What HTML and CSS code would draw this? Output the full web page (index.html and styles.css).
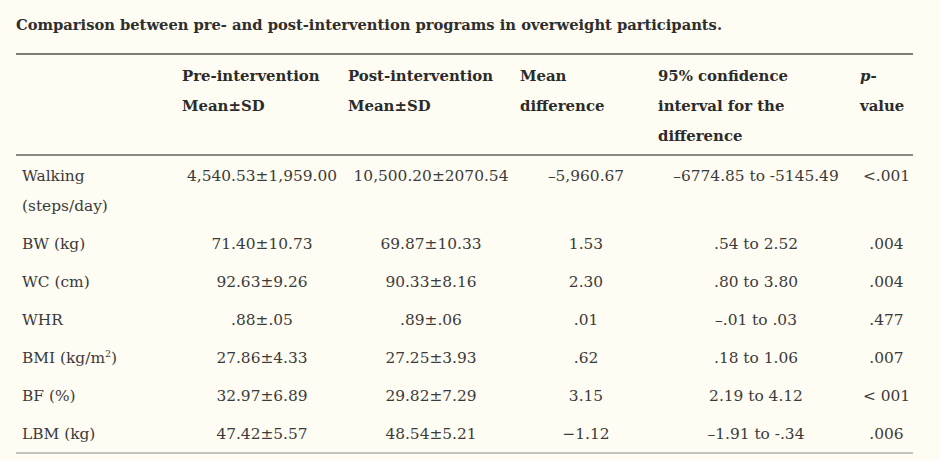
FILE: index.html
```html
<!DOCTYPE html>
<html>
<head>
<meta charset="utf-8">
<link rel="stylesheet" href="styles.css">
</head>
<body>
<div class="page">
  <div class="title">Comparison between pre- and post-intervention programs in overweight participants.</div>
  <table class="data">
    <colgroup>
      <col class="c1"><col class="c2"><col class="c3"><col class="c4"><col class="c5"><col class="c6">
    </colgroup>
    <thead>
      <tr>
        <th></th>
        <th>Pre-intervention<br>Mean±SD</th>
        <th>Post-intervention<br>Mean±SD</th>
        <th>Mean<br>difference</th>
        <th>95% confidence<br>interval for the<br>difference</th>
        <th><i>p</i>-<br>value</th>
      </tr>
    </thead>
    <tbody>
      <tr><td class="lbl">Walking<br>(steps/day)</td><td>4,540.53±1,959.00</td><td>10,500.20±2070.54</td><td>–5,960.67</td><td>–6774.85 to -5145.49</td><td>&lt;.001</td></tr>
      <tr><td class="lbl">BW (kg)</td><td>71.40±10.73</td><td>69.87±10.33</td><td>1.53</td><td>.54 to 2.52</td><td>.004</td></tr>
      <tr><td class="lbl">WC (cm)</td><td>92.63±9.26</td><td>90.33±8.16</td><td>2.30</td><td>.80 to 3.80</td><td>.004</td></tr>
      <tr><td class="lbl">WHR</td><td>.88±.05</td><td>.89±.06</td><td>.01</td><td>–.01 to .03</td><td>.477</td></tr>
      <tr><td class="lbl">BMI (kg/m<sup>2</sup>)</td><td>27.86±4.33</td><td>27.25±3.93</td><td>.62</td><td>.18 to 1.06</td><td>.007</td></tr>
      <tr><td class="lbl">BF (%)</td><td>32.97±6.89</td><td>29.82±7.29</td><td>3.15</td><td>2.19 to 4.12</td><td>&lt; 001</td></tr>
      <tr><td class="lbl">LBM (kg)</td><td>47.42±5.57</td><td>48.54±5.21</td><td>−1.12</td><td>–1.91 to -.34</td><td>.006</td></tr>
    </tbody>
  </table>
</div>
</body>
</html>
```

FILE: styles.css
```css
html, body {
  margin: 0;
  padding: 0;
  background: #fffdf3;
}
.page {
  width: 897px;
  padding: 14px 0 0 16px;
  font-family: "DejaVu Serif", "Liberation Serif", serif;
  color: #3a3a3a;
}
.title {
  font-weight: bold;
  font-size: 14.7px;
  line-height: 22px;
  color: #2e2e2e;
  margin-bottom: 17px;
}
.data {
  width: 897px;
  border-collapse: collapse;
  table-layout: fixed;
  font-size: 15.4px;
}
.c1 { width: 160px; }
.c2 { width: 166px; }
.c3 { width: 172px; }
.c4 { width: 138px; }
.c5 { width: 202px; }
.c6 { width: 59px; }
.data thead tr {
  border-top: 2px solid #7d7d74;
  border-bottom: 2px solid #8a8a82;
}
.data th {
  text-align: left;
  vertical-align: top;
  font-weight: bold;
  font-size: 14.9px;
  color: #2b2b2b;
  line-height: 30px;
  padding: 6px 0 3px 6px;
  white-space: nowrap;
}
.data td {
  text-align: center;
  vertical-align: top;
  line-height: 30px;
  padding: 5px 0 3px 6px;
  white-space: nowrap;
}
.data td.lbl {
  text-align: left;
}
.data tbody tr:last-child {
  border-bottom: 2px solid #c4c4bc;
}
sup {
  font-size: 9.5px;
  line-height: 0;
  vertical-align: 6px;
}
```
